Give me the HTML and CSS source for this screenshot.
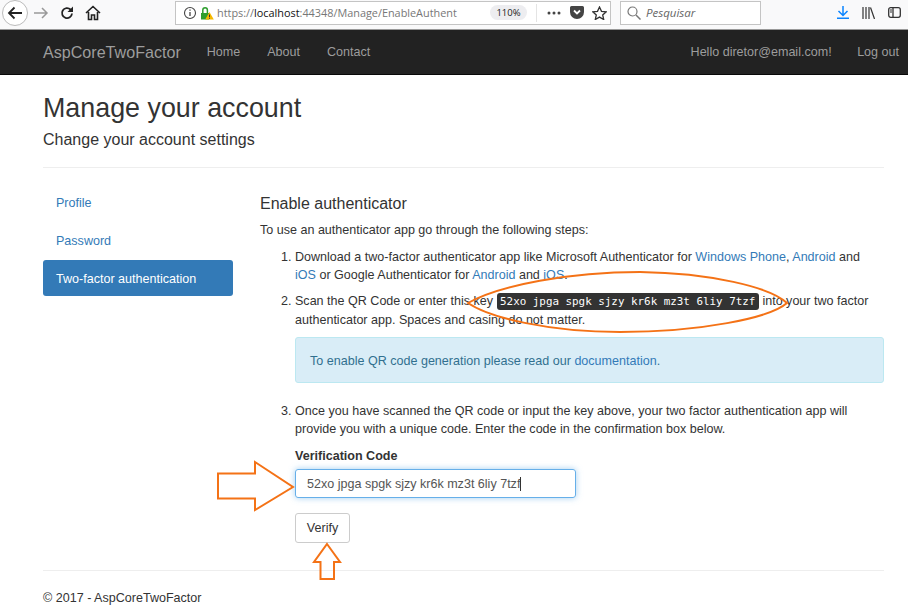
FILE: index.html
```html
<!DOCTYPE html>
<html lang="en">
<head>
<meta charset="utf-8">
<title>Enable authenticator</title>
<link rel="stylesheet" href="styles.css">
</head>
<body>
<div class="toolbar">
  <div class="nav-buttons">
    <span class="back"><svg width="18" height="18" viewBox="0 0 18 18"><path d="M16 9H3M8.500 3.500L3 9l5.500 5.500" fill="none" stroke="#222" stroke-width="1.800"/></svg></span>
    <svg class="tb-icon" width="16" height="16" viewBox="0 0 16 16"><path d="M1 8h13M9 3l5 5-5 5" fill="none" stroke="#999" stroke-width="1.500"/></svg>
    <svg class="tb-icon" width="16" height="16" viewBox="0 0 16 16"><path d="M13 8.500A5 5 0 1 1 11.500 4.500L13.500 6" fill="none" stroke="#222" stroke-width="1.800"/><path d="M14 1.500V7H8.500z" fill="#222"/></svg>
    <svg class="tb-icon" width="16" height="16" viewBox="0 0 16 16"><path d="M1 8l7-6.500L15 8M3.500 7v7.500h3V10h3v4.500h3V7" fill="none" stroke="#222" stroke-width="1.600"/></svg>
  </div>
  <div class="urlbar">
    <svg class="info" width="14" height="14" viewBox="0 0 14 14"><circle cx="7" cy="7" r="5.500" fill="none" stroke="#444" stroke-width="1.100"/><path d="M7 6v4M7 3.500v1.300" stroke="#444" stroke-width="1.300"/></svg>
    <svg class="lock" width="14" height="14" viewBox="0 0 14 14"><path d="M1 7h8v6.500H1z" fill="#2e9e2e"/><path d="M2.800 7V4a2.300 2.300 0 0 1 4.600 0v3" fill="none" stroke="#2e9e2e" stroke-width="1.500"/><path d="M9.500 6l4.300 7.500H5.200z" fill="#f5b800"/><path d="M9.500 8.500v2.500M9.500 11.700v1" stroke="#333"/></svg>
    <span class="url"><span class="url-dim">https://</span>localhost<span class="url-dim">:44348/Manage/EnableAuthent</span></span>
    <span class="zoom-pill">110%</span>
    <span class="url-sep"></span>
    <svg class="dots" width="14" height="4" viewBox="0 0 14 4"><circle cx="2" cy="2" r="1.500" fill="#444"/><circle cx="7" cy="2" r="1.500" fill="#444"/><circle cx="12" cy="2" r="1.500" fill="#444"/></svg>
    <svg class="pocket" width="14" height="13" viewBox="0 0 14 13"><path d="M1.500 0h11A1.500 1.500 0 0 1 14 1.500V6A7 7 0 0 1 0 6V1.500A1.500 1.500 0 0 1 1.500 0z" fill="#444"/><path d="M4 4.500l3 3 3-3" fill="none" stroke="#fff" stroke-width="1.800"/></svg>
    <svg class="star" width="15" height="14" viewBox="0 0 15 14"><path d="M7.500 1l2 4.300 4.700.5-3.500 3.200 1 4.500-4.200-2.400-4.200 2.400 1-4.500L.8 5.800l4.700-.5z" fill="none" stroke="#333" stroke-width="1.300"/></svg>
  </div>
  <div class="searchbar">
    <svg width="14" height="14" viewBox="0 0 14 14"><circle cx="5.500" cy="5.500" r="4.500" fill="none" stroke="#777" stroke-width="1.200"/><path d="M9 9l4.500 4.500" stroke="#777" stroke-width="1.500"/></svg>
    <span class="search-text">Pesquisar</span>
  </div>
  <div class="tools">
    <svg width="12" height="13" viewBox="0 0 12 13"><path d="M6 0v8.500M1.500 5L6 9.500 10.500 5M0 12.300h12" fill="none" stroke="#0a84ff" stroke-width="1.500"/></svg>
    <svg width="13" height="12" viewBox="0 0 13 12"><path d="M1 0v12M4 0v12M7 0v12M8.500 .5l4 11.500" fill="none" stroke="#333" stroke-width="1.200"/></svg>
    <svg width="13" height="11" viewBox="0 0 13 11"><rect x=".7" y=".7" width="11.600" height="9.600" rx="2" fill="none" stroke="#333" stroke-width="1.300"/><path d="M5 .7v9.600" stroke="#333" stroke-width="1.300"/><path d="M2 3h2M2 5h2" stroke="#333"/></svg>
  </div>
</div>

<nav class="navbar">
  <a class="brand">AspCoreTwoFactor</a>
  <a class="nav-link">Home</a>
  <a class="nav-link">About</a>
  <a class="nav-link">Contact</a>
  <span class="nav-right">
    <a class="nav-link">Hello diretor@email.com!</a>
    <a class="nav-link">Log out</a>
  </span>
</nav>

<main class="page">
  <h1>Manage your account</h1>
  <h2 class="subtitle">Change your account settings</h2>
  <hr class="rule">
  <div class="columns">
    <ul class="side">
      <li><a>Profile</a></li>
      <li><a>Password</a></li>
      <li class="active"><a>Two-factor authentication</a></li>
    </ul>
    <section class="content">
      <h3>Enable authenticator</h3>
      <p class="intro">To use an authenticator app go through the following steps:</p>
      <ol class="steps">
        <li>
          <p>Download a two-factor authenticator app like Microsoft Authenticator for <a>Windows Phone</a>, <a>Android</a> and <a>iOS</a> or Google Authenticator for <a>Android</a> and <a>iOS</a>.</p>
        </li>
        <li>
          <p>Scan the QR Code or enter this key <kbd>52xo jpga spgk sjzy kr6k mz3t 6liy 7tzf</kbd> into your two factor authenticator app. Spaces and casing do not matter.</p>
          <div class="alert">To enable QR code generation please read our <a>documentation</a>.</div>
        </li>
        <li>
          <p>Once you have scanned the QR code or input the key above, your two factor authentication app will provide you with a unique code. Enter the code in the confirmation box below.</p>
          <label class="field-label" for="code">Verification Code</label>
          <div class="input" id="code">52xo jpga spgk sjzy kr6k mz3t 6liy 7tzf<span class="caret"></span></div>
          <button class="btn" type="button">Verify</button>
        </li>
      </ol>
    </section>
  </div>
  <hr class="rule foot-rule">
  <footer>© 2017 - AspCoreTwoFactor</footer>
</main>

<svg class="marks" width="908" height="614" viewBox="0 0 908 614">
  <path d="M468 303C500 285 570 272 640 272C710 273 770 287 787 303C770 318 700 332 620 332C550 332 490 318 468 303Z" fill="none" stroke="#f47216" stroke-width="2"/>
  <path d="M218 473.500H255V462L293 487L255 510V498.500H218Z" fill="none" stroke="#f47216" stroke-width="2"/>
  <path d="M327 544L340 562H334V579H320.500V562H314Z" fill="none" stroke="#f47216" stroke-width="2"/>
</svg>
</body>
</html>
```
FILE: styles.css
```css
* { box-sizing: border-box; }
html, body { margin: 0; padding: 0; }
body {
  width: 908px;
  height: 614px;
  overflow: hidden;
  position: relative;
  background: #fff;
  font-family: "Liberation Sans", Arial, sans-serif;
  font-size: 12.55px;
  line-height: 18px;
  color: #333;
}
a { color: #337ab7; }

.toolbar {
  height: 30px;
  display: flex;
  align-items: center;
  background: #f9f9fa;
  border-bottom: 1px solid #999;
  padding: 0 7px 4px 2px;
}
.nav-buttons { display: flex; align-items: center; width: 173px; }
.back {
  width: 26px; height: 26px;
  border: 1px solid #bbb;
  border-radius: 50%;
  background: #fff;
  display: flex; align-items: center; justify-content: center;
  margin-right: 5px;
}
.tb-icon { margin-right: 10px; }
.urlbar {
  width: 436px; height: 24px;
  background: #fff;
  border: 1px solid #c4c4c4;
  display: flex; align-items: center;
  padding-left: 7px;
}
.lock { margin-left: 3px; }
.url { margin-left: 3px; width: 264px; overflow: hidden; white-space: nowrap; font-family: "Open Sans", sans-serif; font-size: 10.860px; color: #111; }
.url-dim { color: #777; }
.zoom-pill {
  width: 37px; height: 15px; border-radius: 8px; background: #ededf0;
  font-family: "Open Sans", sans-serif; font-size: 9.500px; line-height: 15px; text-align: center; color: #222;
  margin-left: 9px;
}
.url-sep { width: 1px; height: 18px; background: #e4e4e4; margin: 0 10px 0 9px; }
.dots { margin-right: 9px; }
.pocket { margin-right: 8px; }
.searchbar {
  width: 141px; height: 24px; margin-left: 9px;
  background: #fff; border: 1px solid #c4c4c4;
  display: flex; align-items: center; gap: 5px; padding-left: 6px;
}
.search-text { font-family: "Open Sans", sans-serif; font-style: italic; font-size: 11.500px; color: #666; }
.tools { margin-left: auto; display: flex; align-items: center; gap: 13px; }

.navbar {
  height: 45px;
  background: #222;
  border-bottom: 1px solid #080808;
  display: flex;
  align-items: center;
  padding: 0 9px 1px 43px;
  color: #9d9d9d;
}
.brand { font-size: 16.100px; color: #9d9d9d; margin-right: 26px; }
.nav-link { color: #9d9d9d; margin-right: 27px; }
.nav-right { margin-left: auto; display: flex; }
.nav-right .nav-link { margin-right: 25.500px; }
.nav-right .nav-link:last-child { margin-right: 0; }

.page { padding: 0 24px 0 43px; }
h1 { font-size: 26.850px; font-weight: 400; line-height: 32px; margin: 17px 0 0; }
.subtitle { font-size: 16px; font-weight: 400; line-height: 20px; margin: 6px 0 0; }
.rule { border: 0; border-top: 1px solid #eee; margin: 17px 0 0; }
.columns { display: flex; margin-top: 16px; }
.side { list-style: none; margin: 0; padding: 0; width: 190px; flex: none; }
.side li { margin-bottom: 2px; }
.side a { display: block; padding: 10px 13px 0; height: 36px; border-radius: 3px; }
.side .active a { background: #337ab7; color: #fff; }
.content { margin-left: 27px; flex: 1; }
h3 { font-size: 16px; font-weight: 400; line-height: 20px; margin: 10px 0 0; }
.intro { margin: 7px 0 0; }
.steps { margin: 9px 0 0; padding: 0 0 0 35px; }
.steps li p { margin: 0; }
.steps li { margin-bottom: 8px; }
.steps li:nth-child(2) { margin-bottom: 19px; }
kbd {
  font-family: "DejaVu Sans Mono", monospace;
  font-size: 10.880px;
  background: #333; color: #fff;
  border-radius: 3px;
  padding: 2px 3.500px;
}
.alert {
  margin: 8px 0 0;
  height: 46px;
  padding: 14px 14px 0;
  background: #d9edf7;
  border: 1px solid #bce8f1;
  border-radius: 3px;
  color: #31708f;
}
.alert a { color: #337ab7; }
.field-label { display: block; font-weight: 700; margin-top: 9px; }
.input {
  width: 281px; height: 29px;
  margin: 4px 0 0;
  padding: 5px 11px;
  border: 1px solid #66afe9;
  border-radius: 3px;
  box-shadow: 0 0 6px rgba(102,175,233,.6);
  color: #555;
  white-space: nowrap;
}
.caret { display: inline-block; width: 1px; height: 14px; background: #333; vertical-align: -3px; }
.btn {
  display: block;
  margin: 15px 0 0;
  width: 55px; height: 30px;
  background: #fff;
  border: 1px solid #ccc;
  border-radius: 3px;
  font: inherit;
  color: #333;
  padding: 0;
}
.foot-rule { margin-top: 19px; }
footer { margin-top: 18px; }

.marks { position: absolute; left: 0; top: 0; pointer-events: none; }
```
